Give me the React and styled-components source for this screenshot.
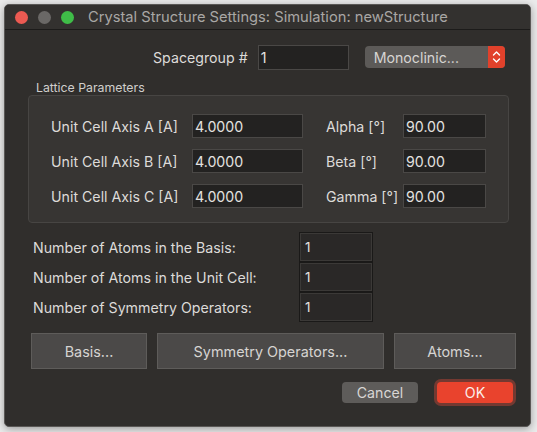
import React from "react";
import styled, { createGlobalStyle } from "styled-components";

const Global = createGlobalStyle`
  html, body { margin: 0; padding: 0; background: #ebebeb; }
  body { font-family: Inter, "Noto Sans", "Liberation Sans", sans-serif; -webkit-font-smoothing: antialiased; }
  * { box-sizing: border-box; }
`;

const Stage = styled.div`
  width: 537px;
  height: 432px;
  padding: 4px 0 0 4px;
`;

const Window = styled.div`
  width: 527px;
  height: 423px;
  background: #302e2c;
  border: 1px solid #5a5856;
  border-radius: 5px;
  box-shadow: 0 2px 8px rgba(0, 0, 0, 0.35);
  overflow: hidden;
  display: flex;
  flex-direction: column;
`;

const TitleBar = styled.div`
  height: 25px;
  flex: none;
  display: flex;
  align-items: center;
  padding-left: 10px;
  background: #33312f;
  border-bottom: 1px solid #1c1b1a;
`;

const Light = styled.span`
  width: 13px;
  height: 13px;
  border-radius: 50%;
  background: ${(p) => p.$c};
  margin-right: 10px;
  flex: none;
`;

const Title = styled.div`
  margin-left: 4px;
  color: #a9a7a5;
  font-size: 14.7px;
  white-space: nowrap;
`;

const Body = styled.div`
  flex: 1;
  display: flex;
  flex-direction: column;
  padding: 14px 0 0 0;
  color: #dcdad8;
  font-size: 14.2px;
`;

const SpaceRow = styled.div`
  display: flex;
  align-items: center;
  padding-left: 148px;
  height: 26px;
`;

const Label = styled.span`
  color: #dddbd9;
  font-size: 14.2px;
  white-space: nowrap;
  margin-right: ${(p) => p.$mr || 0}px;
`;

const Field = styled.div`
  width: ${(p) => p.$w}px;
  height: ${(p) => p.$h || 24}px;
  background: #232221;
  border: 1px solid #4a4846;
  color: #e4e2e0;
  font-size: 14.2px;
  display: flex;
  align-items: center;
  padding-left: 2px;
  flex: none;
`;

const Popup = styled.div`
  margin-left: 16px;
  width: 140px;
  height: 22px;
  border-radius: 4px;
  background: #5c5a58;
  display: flex;
  align-items: stretch;
  overflow: hidden;
`;

const PopupText = styled.span`
  flex: 1;
  color: #d6d4d2;
  font-size: 14.2px;
  padding-left: 9px;
  display: flex;
  align-items: center;
`;

const Stepper = styled.span`
  width: 17px;
  background: #e1412b;
  display: flex;
  align-items: center;
  justify-content: center;
`;

const GroupTitle = styled.div`
  margin: 10px 0 0 31px;
  font-size: 12.3px;
  color: #d0cecc;
  height: 15px;
`;

const GroupBox = styled.div`
  margin: 0 0 0 23px;
  width: 481px;
  height: 128px;
  background: #373533;
  border: 1px solid #474543;
  border-radius: 4px;
  padding: 18px 0 0 22px;
  display: grid;
  grid-template-columns: 141px 111px 23px 77px 83px;
  grid-auto-rows: 24px;
  row-gap: 11px;
  align-items: center;
`;

const Gap = styled.span``;

const CountGrid = styled.div`
  margin: 9px 0 0 28px;
  display: grid;
  grid-template-columns: 266px 74px;
  grid-auto-rows: 30px;
  align-items: center;
`;

const CountField = styled.div`
  width: 74px;
  height: 30px;
  background: #2a2827;
  border: 1px solid #1a1918;
  outline: 1px solid #3b3937;
  outline-offset: -2px;
  color: #e4e2e0;
  font-size: 13.5px;
  display: flex;
  align-items: center;
  padding-left: 5px;
`;

const ButtonRow = styled.div`
  margin: 11px 0 0 26px;
  display: flex;
  gap: 10px;
`;

const BigButton = styled.div`
  width: ${(p) => p.$w}px;
  height: 36px;
  background: #4b4948;
  border: 1px solid #5e5c5a;
  color: #d6d4d2;
  font-size: 14.4px;
  display: flex;
  align-items: center;
  justify-content: center;
`;

const Footer = styled.div`
  margin: 13px 0 0 0;
  padding-right: 17px;
  display: flex;
  justify-content: flex-end;
  align-items: center;
  gap: 19px;
`;

const PushButton = styled.div`
  width: 76px;
  height: 21px;
  border-radius: 4px;
  background: ${(p) => (p.$primary ? "#e9432d" : "#5e5c5a")};
  color: ${(p) => (p.$primary ? "#fbeeea" : "#d8d6d4")};
  font-size: 14.2px;
  display: flex;
  align-items: center;
  justify-content: center;
  box-shadow: ${(p) => (p.$primary ? "0 0 0 3px rgba(200, 70, 55, 0.45)" : "none")};
`;

const lattice = [
  ["Unit Cell Axis A [A]", "4.0000", "Alpha [°]", "90.00"],
  ["Unit Cell Axis B [A]", "4.0000", "Beta [°]", "90.00"],
  ["Unit Cell Axis C [A]", "4.0000", "Gamma [°]", "90.00"],
];

const counts = [
  ["Number of Atoms in the Basis:", "1"],
  ["Number of Atoms in the Unit Cell:", "1"],
  ["Number of Symmetry Operators:", "1"],
];

export default function App() {
  return (
    <>
      <Global />
      <Stage>
        <Window>
          <TitleBar>
            <Light $c="#ec5a52" />
            <Light $c="#6a6866" />
            <Light $c="#3fbd48" />
            <Title>Crystal Structure Settings: Simulation: newStructure</Title>
          </TitleBar>
          <Body>
            <SpaceRow>
              <Label $mr={10}>Spacegroup #</Label>
              <Field $w={91} $h={25}>1</Field>
              <Popup>
                <PopupText>Monoclinic...</PopupText>
                <Stepper>
                  <svg width="9" height="14" viewBox="0 0 9 14">
                    <path d="M1.5 5 L4.5 2 L7.5 5" stroke="#fff" strokeWidth="1.4" fill="none" strokeLinecap="round" strokeLinejoin="round" />
                    <path d="M1.5 9 L4.5 12 L7.5 9" stroke="#fff" strokeWidth="1.4" fill="none" strokeLinecap="round" strokeLinejoin="round" />
                  </svg>
                </Stepper>
              </Popup>
            </SpaceRow>
            <GroupTitle>Lattice Parameters</GroupTitle>
            <GroupBox>
              {lattice.map(([l, v, al, av]) => (
                <React.Fragment key={l}>
                  <Label>{l}</Label>
                  <Field $w={111}>{v}</Field>
                  <Gap />
                  <Label>{al}</Label>
                  <Field $w={83}>{av}</Field>
                </React.Fragment>
              ))}
            </GroupBox>
            <CountGrid>
              {counts.map(([l, v]) => (
                <React.Fragment key={l}>
                  <Label>{l}</Label>
                  <CountField>{v}</CountField>
                </React.Fragment>
              ))}
            </CountGrid>
            <ButtonRow>
              <BigButton $w={116}>Basis...</BigButton>
              <BigButton $w={227}>Symmetry Operators...</BigButton>
              <BigButton $w={122}>Atoms...</BigButton>
            </ButtonRow>
            <Footer>
              <PushButton>Cancel</PushButton>
              <PushButton $primary>OK</PushButton>
            </Footer>
          </Body>
        </Window>
      </Stage>
    </>
  );
}
